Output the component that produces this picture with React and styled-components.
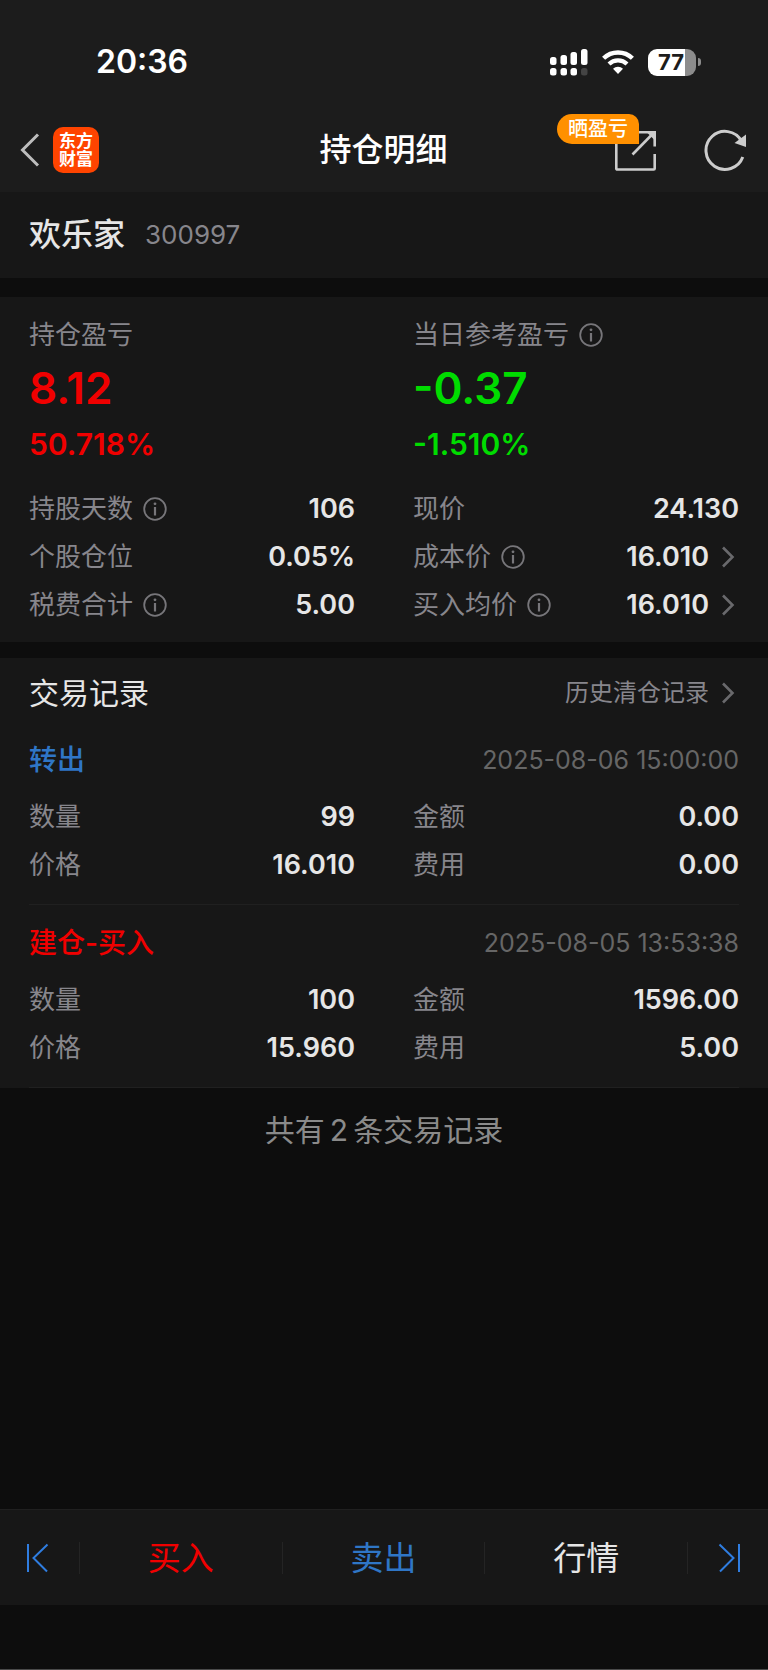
import styled, { createGlobalStyle } from "styled-components";

const GlobalStyle = createGlobalStyle`
  * {
    box-sizing: border-box;
  }

  body {
    margin: 0;
    background: #0d0d0d;
    color: #e6e6e6;
    font-family: Inter, "Noto Sans CJK SC", sans-serif;
    font-size: 26px;
    line-height: 40px;
  }

  button {
    border: none;
    padding: 0;
    background: none;
    color: inherit;
    font: inherit;
    cursor: pointer;
  }

  a {
    color: inherit;
    text-decoration: none;
  }

  h1, h2, h3, p, dl, dd {
    margin: 0;
    font-weight: inherit;
  }

  svg {
    display: block;
    flex: none;
  }
`;

const Page = styled.div`
  min-height: 100vh;
  display: flex;
  flex-direction: column;
  border-bottom: 1px solid #4a4a4a;
`;

const Header = styled.header`
  background: #1c1c1c;
`;

const StatusBar = styled.div`
  height: 108px;
  padding: 16px 67px 0 96px;
  display: flex;
  align-items: center;
  justify-content: space-between;
  color: white;
`;

const Time = styled.time`
  font-size: 32px;
  font-weight: 600;
`;

const StatusIcons = styled.div`
  display: flex;
  align-items: center;
  gap: 14px;
`;

const Battery = styled.div`
  display: flex;
  align-items: center;
  gap: 2px;

  &::after {
    content: "";
    width: 3px;
    height: 8px;
    border-radius: 0 4px 4px 0;
    background: #8c8c8c;
  }
`;

const BatteryLevel = styled.span`
  width: 48px;
  height: 27px;
  padding-right: 2px;
  border-radius: 9px;
  background: linear-gradient(to right, white 77%, #8c8c8c 77%);
  color: #1c1c1c;
  font-size: 22px;
  font-weight: 700;
  line-height: 27px;
  text-align: center;
`;

const NavBar = styled.div`
  height: 84px;
  padding: 0 21px 0 20px;
  display: grid;
  grid-template-columns: 1fr auto 1fr;
  align-items: center;
`;

const NavLeft = styled.div`
  display: flex;
  align-items: center;
  gap: 13px;
`;

const Logo = styled.span`
  width: 46px;
  height: 46px;
  padding: 5px 6px;
  border-radius: 10px;
  background: #ff4400;
  color: white;
  font-size: 17px;
  font-weight: 700;
  line-height: 18px;
  text-align: center;
`;

const Title = styled.h1`
  color: white;
  font-size: 32px;
  font-weight: 500;
`;

const NavRight = styled.div`
  display: flex;
  align-items: center;
  justify-content: flex-end;
  gap: 46px;
`;

const ShareButton = styled.button`
  position: relative;
`;

const ShareBadge = styled.span`
  position: absolute;
  right: 18px;
  bottom: 27px;
  width: 82px;
  height: 30px;
  border-radius: 15px 10px 0 15px;
  background: #ff9000;
  color: white;
  font-size: 20px;
  font-weight: 500;
  line-height: 30px;
`;

const StockBar = styled.section`
  height: 86px;
  padding: 0 29px;
  display: flex;
  align-items: center;
  gap: 20px;
  background: #171717;
`;

const StockName = styled.h2`
  font-size: 32px;
  font-weight: 500;
`;

const StockCode = styled.span`
  color: #87868c;
`;

const Panel = styled.section`
  margin-top: ${(props) => props.$gap}px;
  background: #171717;
`;

const Columns = styled.div`
  display: grid;
  grid-template-columns: 1fr 1fr;
  column-gap: 58px;
`;

const Summary = styled(Columns)`
  padding: 18px 29px;
`;

const Profit = styled.div`
  color: ${(props) => props.$color};
`;

const Label = styled.span`
  display: flex;
  align-items: center;
  gap: 10px;
  color: #87868c;
`;

const Amount = styled.p`
  font-size: 44px;
  font-weight: 600;
  line-height: 66px;
`;

const Percent = styled.p`
  font-size: 30px;
  font-weight: 600;
  line-height: 46px;
`;

const Facts = styled(Columns).attrs({ as: "dl" })`
  padding: 0 29px 13px;
`;

const Fact = styled.div`
  height: 48px;
  display: flex;
  align-items: center;
  justify-content: space-between;
`;

const Value = styled.dd`
  font-size: 27px;
  font-weight: 600;
`;

const ValueButton = styled.button`
  display: flex;
  align-items: center;
  gap: 12px;
`;

const RecordsHeader = styled.div`
  height: 64px;
  padding: 6px 29px 0;
  display: flex;
  align-items: center;
  justify-content: space-between;
`;

const RecordsTitle = styled.h2`
  font-size: 30px;
`;

const HistoryLink = styled.a`
  display: flex;
  align-items: center;
  gap: 12px;
  color: #87868c;
  font-size: 24px;
`;

const Record = styled.article`
  margin: 0 29px;
  padding: 5px 0 15px;
  border-bottom: 1px solid #202020;

  ${Facts} {
    padding: 0;
  }
`;

const RecordHead = styled.div`
  height: 66px;
  display: flex;
  align-items: center;
  justify-content: space-between;
`;

const RecordType = styled.h3`
  color: ${(props) => props.$color};
  font-size: 28px;
  font-weight: 500;
`;

const RecordTime = styled.time`
  color: #666666;
  font-size: 25px;
`;

const Total = styled.p`
  padding: 22px;
  color: #8a8a8a;
  font-size: 30px;
`;

const TotalText = styled(Total)`
  text-align: center;
`;

const TotalCount = styled.span`
  margin: 0 5px;
`;

const TradeBar = styled.nav`
  height: 96px;
  margin: auto 0 64px;
  display: flex;
  align-items: center;
  border-top: 1px solid #202020;
  background: #171717;
`;

const TradeButton = styled.button`
  flex: 1;
  height: 32px;
  border-right: 1px solid #242424;
  color: ${(props) => props.$color};
  font-size: 33px;
  line-height: 32px;
`;

const StepButton = styled.button`
  width: 80px;
  height: 32px;
  display: flex;
  align-items: center;
  justify-content: ${(props) => (props.$last ? "flex-end" : "flex-start")};
  padding: 0 26px;
  border-right: ${(props) => (props.$last ? "none" : "1px solid #242424")};
  color: #2f7de0;
`;

const RED = "#f00000";
const GREEN = "#00dc00";
const BLUE = "#2f76c6";

const position = [
  { label: "持股天数", value: "106", info: true },
  { label: "现价", value: "24.130" },
  { label: "个股仓位", value: "0.05%" },
  { label: "成本价", value: "16.010", info: true, more: true },
  { label: "税费合计", value: "5.00", info: true },
  { label: "买入均价", value: "16.010", info: true, more: true },
];

const records = [
  {
    type: "转出",
    color: BLUE,
    time: "2025-08-06 15:00:00",
    facts: [
      { label: "数量", value: "99" },
      { label: "金额", value: "0.00" },
      { label: "价格", value: "16.010" },
      { label: "费用", value: "0.00" },
    ],
  },
  {
    type: "建仓-买入",
    color: RED,
    time: "2025-08-05 13:53:38",
    facts: [
      { label: "数量", value: "100" },
      { label: "金额", value: "1596.00" },
      { label: "价格", value: "15.960" },
      { label: "费用", value: "5.00" },
    ],
  },
];

function SignalIcon() {
  return (
    <svg width="38" height="27" viewBox="0 0 38 27" fill="currentColor">
      <rect x="0" y="8" width="6.5" height="8" rx="2.5" />
      <rect x="10.5" y="6" width="6.5" height="10" rx="2.5" />
      <rect x="20.5" y="3" width="6.5" height="13" rx="2.5" />
      <rect x="31" y="0" width="6.5" height="16" rx="2.5" />
      <rect x="0" y="19" width="6.5" height="7.5" rx="2.5" />
      <rect x="10.5" y="19" width="6.5" height="7.5" rx="2.5" />
      <rect x="20.5" y="19" width="6.5" height="7.5" rx="2.5" />
      <rect x="31" y="19" width="6.5" height="7.5" rx="2.5" fill="#444444" />
    </svg>
  );
}

function WifiIcon() {
  return (
    <svg width="32" height="24" viewBox="0 0 32 24" fill="none">
      <path d="M1.6 8.3a20.6 20.6 0 0 1 28.8 0" stroke="currentColor" strokeWidth="4.4" />
      <path d="M7 14a12.8 12.8 0 0 1 18 0" stroke="currentColor" strokeWidth="4.2" />
      <path d="M16 24l-5-5.2a7.2 7.2 0 0 1 10 0z" fill="currentColor" />
    </svg>
  );
}

function BackIcon() {
  return (
    <svg width="20" height="34" viewBox="0 0 20 34" fill="none" stroke="#bdbdbd" strokeWidth="3">
      <path d="M18 1.5L2.5 17L18 32.5" />
    </svg>
  );
}

function ShareIcon() {
  return (
    <svg width="42" height="42" viewBox="0 0 42 42" fill="none" stroke="#cccccc" strokeWidth="2.6">
      <path d="M18 3.3H39.7V17.5" />
      <path d="M39.7 25V39.5a1 1 0 0 1-1 1H2.3a1 1 0 0 1-1-1V12" />
      <path d="M17.500 25.500L38 4.5" />
      <path d="M32.5 4H39V10.5z" fill="#cccccc" stroke="none" />
    </svg>
  );
}

function RefreshIcon() {
  return (
    <svg width="44" height="44" viewBox="0 0 44 44" fill="none" stroke="#cccccc" strokeWidth="3">
      <path d="M38.5 13A19 19 0 1 0 39.8 29" />
      <path d="M43 6.5V19L31.5 15z" fill="#cccccc" stroke="none" />
    </svg>
  );
}

function InfoIcon() {
  return (
    <svg width="24" height="24" viewBox="0 0 24 24" fill="none" stroke="#77767a" strokeWidth="1.8">
      <circle cx="12" cy="12" r="10.8" />
      <path d="M12 10V18.5" strokeWidth="2.2" />
      <circle cx="12" cy="6.8" r="1.4" fill="#77767a" stroke="none" />
    </svg>
  );
}

function ChevronIcon() {
  return (
    <svg width="18" height="22" viewBox="0 0 18 22" fill="none" stroke="#69696c" strokeWidth="2.6">
      <path d="M2 1.5L11.5 11L2 20.5" />
    </svg>
  );
}

function StepIcon({ flip }) {
  return (
    <svg width="24" height="30" viewBox="0 0 24 30" fill="none" stroke="currentColor" strokeWidth="2">
      <path d={flip ? "M1.5 1.5L15.5 15L2 28.5M21 1V29" : "M21.5 1.5L7.5 15L21 28.5M2 1V29"} />
    </svg>
  );
}

function FactList({ items }) {
  return (
    <Facts>
      {items.map((item) => (
        <Fact key={item.label}>
          <Label as="dt">
            {item.label}
            {item.info && (
              <button aria-label={item.label + "说明"}>
                <InfoIcon />
              </button>
            )}
          </Label>
          <Value>
            {item.more ? (
              <ValueButton>
                {item.value}
                <ChevronIcon />
              </ValueButton>
            ) : (
              item.value
            )}
          </Value>
        </Fact>
      ))}
    </Facts>
  );
}

function App() {
  return (
    <Page>
      <GlobalStyle />
      <Header>
        <StatusBar>
          <Time>20:36</Time>
          <StatusIcons>
            <SignalIcon />
            <WifiIcon />
            <Battery>
              <BatteryLevel>77</BatteryLevel>
            </Battery>
          </StatusIcons>
        </StatusBar>
        <NavBar>
          <NavLeft>
            <button aria-label="返回">
              <BackIcon />
            </button>
            <Logo>东方财富</Logo>
          </NavLeft>
          <Title>持仓明细</Title>
          <NavRight>
            <ShareButton>
              <ShareIcon />
              <ShareBadge>晒盈亏</ShareBadge>
            </ShareButton>
            <button aria-label="刷新">
              <RefreshIcon />
            </button>
          </NavRight>
        </NavBar>
      </Header>

      <StockBar>
        <StockName>欢乐家</StockName>
        <StockCode>300997</StockCode>
      </StockBar>

      <Panel $gap={19}>
        <Summary>
          <Profit $color={RED}>
            <Label>持仓盈亏</Label>
            <Amount>8.12</Amount>
            <Percent>50.718%</Percent>
          </Profit>
          <Profit $color={GREEN}>
            <Label>
              当日参考盈亏
              <button aria-label="当日参考盈亏说明">
                <InfoIcon />
              </button>
            </Label>
            <Amount>-0.37</Amount>
            <Percent>-1.510%</Percent>
          </Profit>
        </Summary>
        <FactList items={position} />
      </Panel>

      <Panel $gap={16}>
        <RecordsHeader>
          <RecordsTitle>交易记录</RecordsTitle>
          <HistoryLink href="#history">
            历史清仓记录
            <ChevronIcon />
          </HistoryLink>
        </RecordsHeader>
        {records.map((record) => (
          <Record key={record.time}>
            <RecordHead>
              <RecordType $color={record.color}>{record.type}</RecordType>
              <RecordTime>{record.time}</RecordTime>
            </RecordHead>
            <FactList items={record.facts} />
          </Record>
        ))}
      </Panel>

      <TotalText>
        共有<TotalCount>{records.length}</TotalCount>条交易记录
      </TotalText>

      <TradeBar>
        <StepButton aria-label="上一只">
          <StepIcon />
        </StepButton>
        <TradeButton $color={RED}>买入</TradeButton>
        <TradeButton $color={BLUE}>卖出</TradeButton>
        <TradeButton $color="#e6e6e6">行情</TradeButton>
        <StepButton $last aria-label="下一只">
          <StepIcon flip />
        </StepButton>
      </TradeBar>
    </Page>
  );
}

export default App;
